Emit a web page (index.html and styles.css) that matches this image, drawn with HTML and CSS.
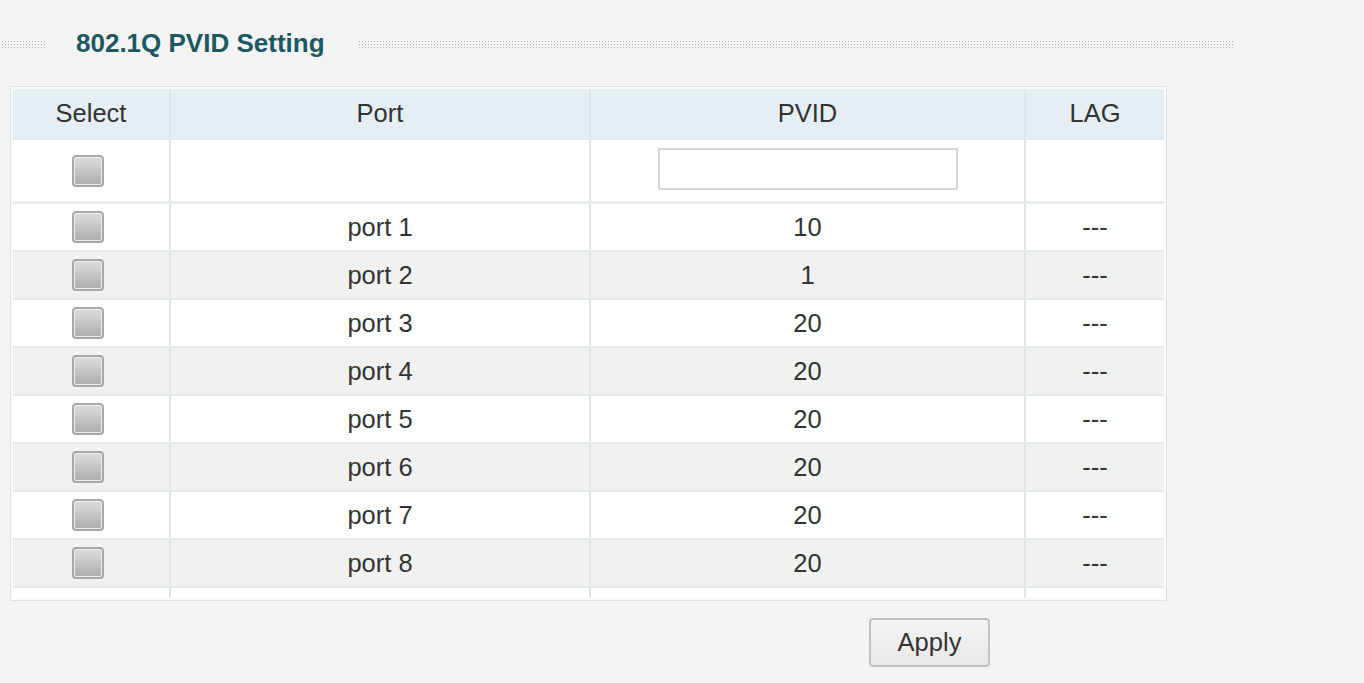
FILE: index.html
```html
<!DOCTYPE html>
<html lang="en">
<head>
    <meta charset="UTF-8">
    <title>802.1Q PVID Setting</title>
    <link rel="stylesheet" href="styles.css">
</head>
<body>
    <div class="page">
        <!-- Section title -->
        <div class="title-bar">
            <div class="dots dots-left"></div>
            <h2 class="title">802.1Q PVID Setting</h2>
            <div class="dots dots-right"></div>
        </div>

        <div class="table-box">
            <table class="pvid-table">
                <colgroup>
                    <col class="col-select">
                    <col class="col-port">
                    <col class="col-pvid">
                    <col class="col-lag">
                </colgroup>
                <thead>
                    <tr class="head-row">
                        <th>Select</th>
                        <th>Port</th>
                        <th>PVID</th>
                        <th>LAG</th>
                    </tr>
                </thead>
                <tbody>
                    <tr class="edit-row">
                        <td><span class="check"></span></td>
                        <td></td>
                        <td><input type="text" class="pvid-input"></td>
                        <td></td>
                    </tr>
                    <tr class="port-row"><td><span class="check"></span></td><td>port 1</td><td>10</td><td>---</td></tr>
                    <tr class="port-row"><td><span class="check"></span></td><td>port 2</td><td>1</td><td>---</td></tr>
                    <tr class="port-row"><td><span class="check"></span></td><td>port 3</td><td>20</td><td>---</td></tr>
                    <tr class="port-row"><td><span class="check"></span></td><td>port 4</td><td>20</td><td>---</td></tr>
                    <tr class="port-row"><td><span class="check"></span></td><td>port 5</td><td>20</td><td>---</td></tr>
                    <tr class="port-row"><td><span class="check"></span></td><td>port 6</td><td>20</td><td>---</td></tr>
                    <tr class="port-row"><td><span class="check"></span></td><td>port 7</td><td>20</td><td>---</td></tr>
                    <tr class="port-row"><td><span class="check"></span></td><td>port 8</td><td>20</td><td>---</td></tr>
                    <tr class="filler-row"><td></td><td></td><td></td><td></td></tr>
                </tbody>
            </table>
        </div>

        <div class="actions">
            <button class="apply-button">Apply</button>
        </div>
    </div>
</body>
</html>
```

FILE: styles.css
```css
body {
    margin: 0;
    padding: 0;
    background-color: #f4f4f4;
    font-family: "Liberation Sans", Arial, sans-serif;
    color: #333;
}

.page {
    padding-top: 29px;
}

.title-bar {
    display: flex;
    align-items: center;
    height: 28px;
}

.dots {
    height: 9px;
    background-image:
        linear-gradient(90deg, #f4f4f4 2px, transparent 2px),
        linear-gradient(#f4f4f4 2px, #afbdc5 2px);
    background-size: 3px 3px;
}

.dots-left {
    width: 46px;
}

.dots-right {
    width: 878px;
}

.title {
    margin: 0 32px 0 30px;
    font-size: 26px;
    font-weight: bold;
    color: #1d5861;
    white-space: nowrap;
}

.table-box {
    margin: 29px 0 0 10px;
    width: 1151px;
    padding: 2px;
    border: 1px solid #dbe3e7;
    background-color: #fafafa;
}

.pvid-table {
    width: 100%;
    border-collapse: collapse;
    table-layout: fixed;
    font-size: 25.5px;
}

.col-select { width: 157px; }
.col-port { width: 420px; }
.col-pvid { width: 435px; }

.pvid-table th,
.pvid-table td {
    padding: 0;
    text-align: center;
    vertical-align: middle;
    border-left: 2px solid #dfe6ea;
    border-bottom: 2px solid #e3e9ec;
}

.pvid-table th:first-child,
.pvid-table td:first-child {
    border-left: none;
}

.head-row th {
    height: 49px;
    background-color: #e5eef3;
    font-weight: normal;
    color: #333;
}

.edit-row td {
    height: 61px;
    background-color: #fff;
    border-bottom: 3px solid #e6ecef;
}

.port-row td {
    height: 46px;
    background-color: #fff;
}

.port-row:nth-child(odd) td {
    background-color: #f1f1f1;
}

.filler-row td {
    height: 10px;
    background-color: #fff;
    border-bottom: none;
}

.check {
    display: inline-block;
    width: 28px;
    height: 28px;
    margin-left: -6px;
    vertical-align: middle;
    border: 2px solid #a9a9a9;
    border-radius: 4px;
    background: linear-gradient(#dcdcdc, #adadad);
    box-shadow: inset 0 0 0 1px #ececec;
}

.pvid-input {
    width: 300px;
    height: 42px;
    box-sizing: border-box;
    margin-top: -3px;
    vertical-align: middle;
    border: 2px solid #d6d6d6;
    background-color: #fff;
}

.actions {
    padding: 17px 0 0 869px;
}

.apply-button {
    width: 121px;
    height: 49px;
    font-family: "Liberation Sans", Arial, sans-serif;
    font-size: 25.5px;
    color: #333;
    background: linear-gradient(#f4f4f4, #e8e8e8);
    border: 2px solid #c2c2c2;
    border-radius: 4px;
}
```
